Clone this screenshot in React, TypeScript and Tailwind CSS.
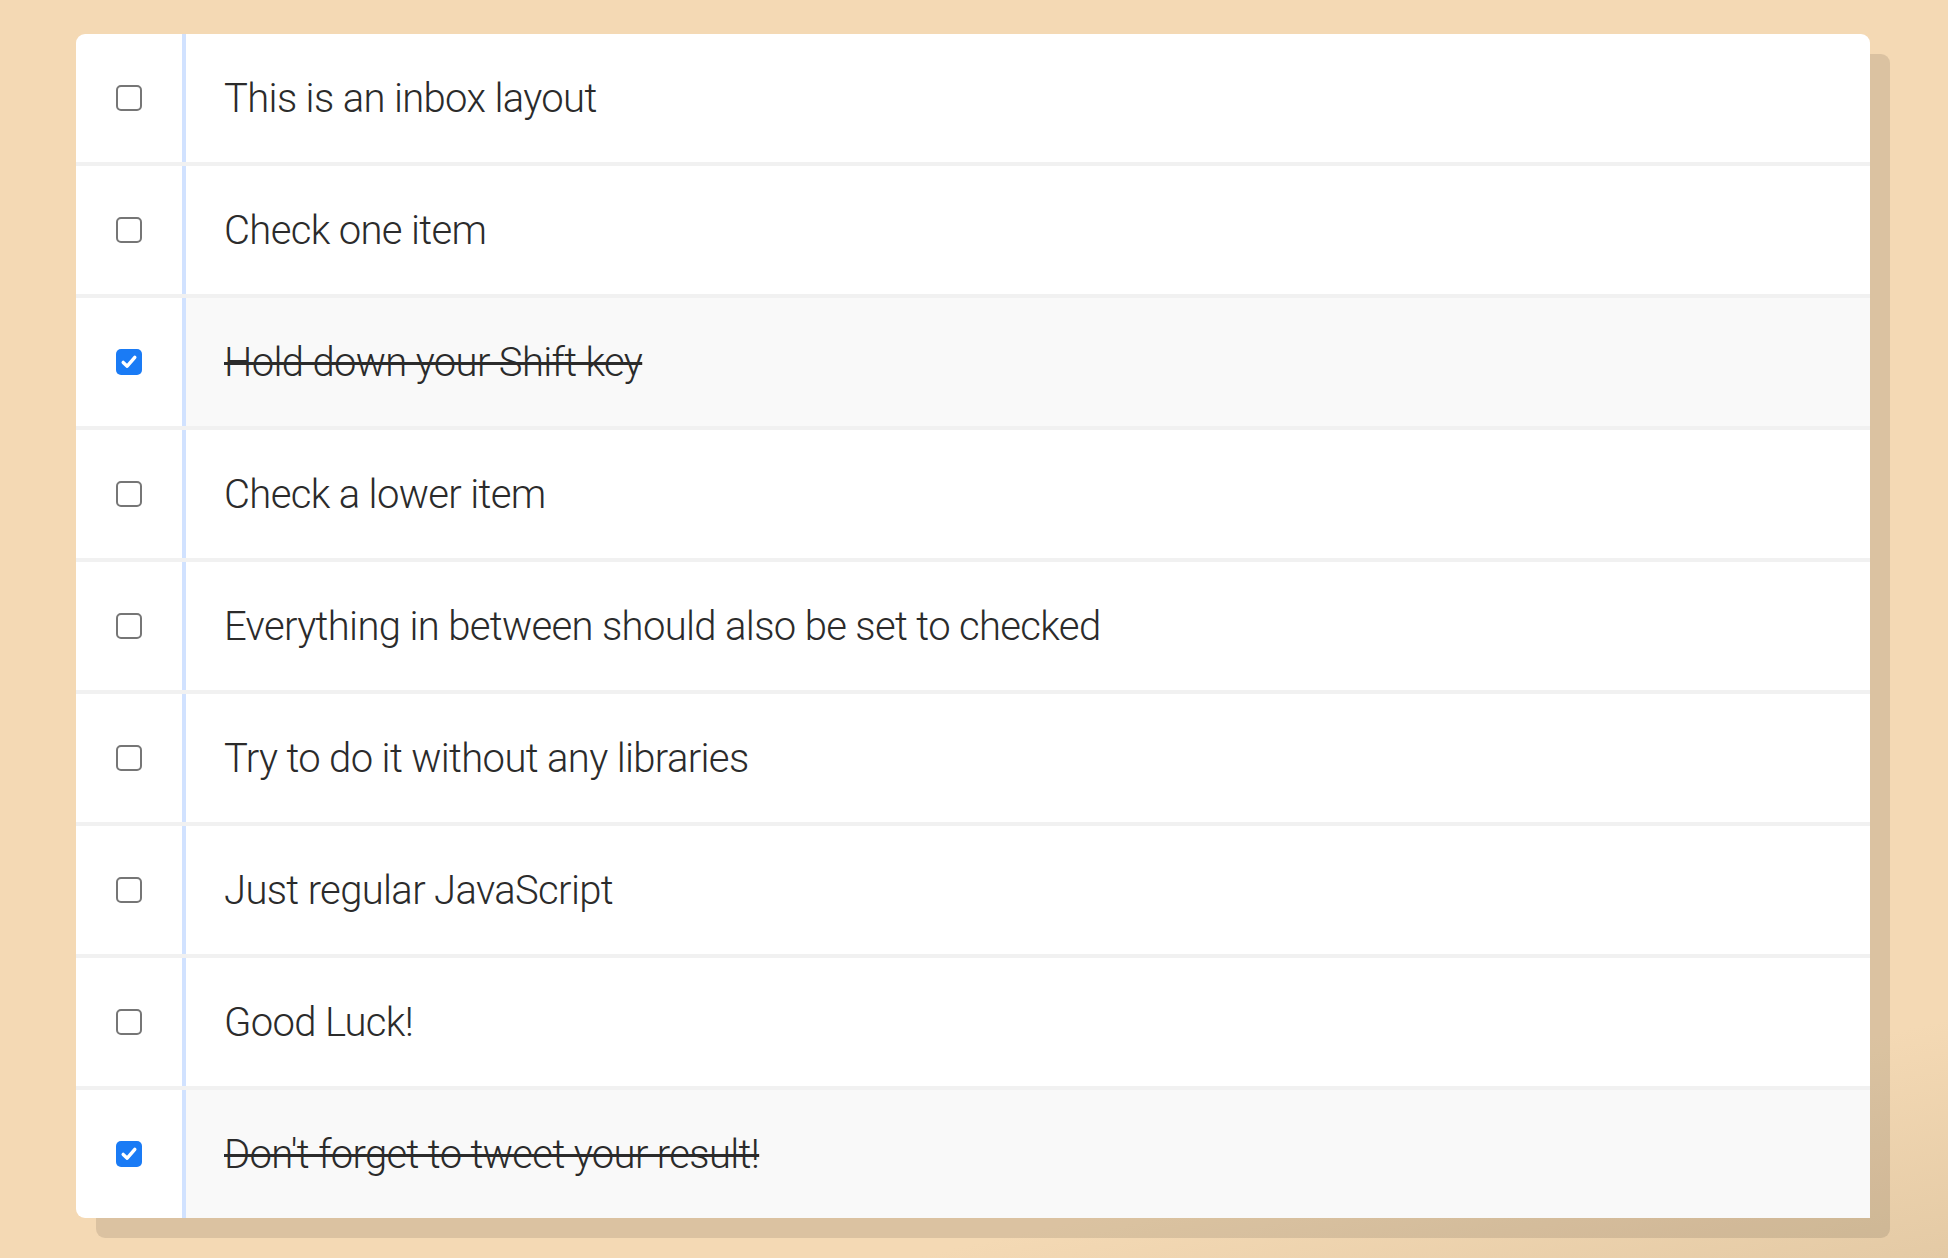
import React, { useState } from 'react';

const ITEMS = [
  'This is an inbox layout',
  'Check one item',
  'Hold down your Shift key',
  'Check a lower item',
  'Everything in between should also be set to checked',
  'Try to do it without any libraries',
  'Just regular JavaScript',
  'Good Luck!',
  "Don't forget to tweet your result!",
];

function Box({ checked }: { checked: boolean }) {
  if (checked) {
    return (
      <span className="w-[26px] h-[26px] rounded-[5px] bg-[#1a7bf5] flex items-center justify-center">
        <svg width="18" height="18" viewBox="0 0 18 18">
          <path d="M3.2 9.4 L7.2 13.2 L14.8 4.4" fill="none" stroke="#fff" strokeWidth="3.4" strokeLinecap="round" strokeLinejoin="round" />
        </svg>
      </span>
    );
  }
  return <span className="w-[26px] h-[26px] rounded-[5px] border-2 border-[#767676] bg-white block" />;
}

export default function App() {
  const [checked, setChecked] = useState<boolean[]>(ITEMS.map((_, i) => i === 2 || i === 8));
  const [last, setLast] = useState<number | null>(null);

  const toggle = (i: number, shift: boolean) => {
    const next = [...checked];
    const value = !next[i];
    next[i] = value;
    if (shift && last !== null && value) {
      const [a, b] = [Math.min(last, i), Math.max(last, i)];
      for (let j = a; j <= b; j++) next[j] = true;
    }
    setChecked(next);
    setLast(i);
  };

  return (
    <div className="min-h-[1258px] w-full bg-[linear-gradient(167deg,#f4d9b4_86%,#e4caa5_100%)] pt-[34px] font-['Roboto','Helvetica_Neue','Liberation_Sans',sans-serif]">
      <div className="w-[1794px] ml-[76px] bg-white rounded-[9px] shadow-[20px_20px_0_rgba(0,0,0,0.1)]">
        {ITEMS.map((text, i) => (
          <div
            key={i}
            onClick={(e) => toggle(i, e.shiftKey)}
            className={`flex items-stretch cursor-pointer ${i < ITEMS.length - 1 ? 'border-b-4 border-[#f1f1f1]' : ''}`}
          >
            <div className="w-[106px] shrink-0 flex items-center justify-center pr-[1px]">
              <Box checked={checked[i]} />
            </div>
            <p
              className={`flex-1 border-l-4 border-[#d1e2ff] pl-[38px] pr-10 pt-[41px] pb-[39px] text-[40px] leading-[48px] font-light text-[#2b2b2b] tracking-[-0.65px] ${
                checked[i] ? 'bg-[#f9f9f9] line-through decoration-[3px]' : ''
              }`}
            >
              {text}
            </p>
          </div>
        ))}
      </div>
    </div>
  );
}
